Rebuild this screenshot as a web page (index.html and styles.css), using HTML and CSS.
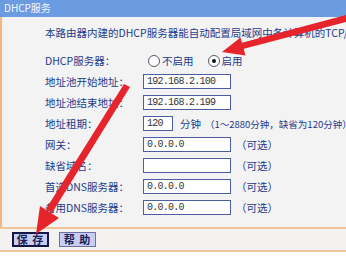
FILE: index.html
```html
<!DOCTYPE html>
<html>
<head>
<meta charset="utf-8">
<link rel="stylesheet" href="styles.css">
</head>
<body>
<div class="page">
  <div class="title">DHCP服务</div>
  <div class="panel">
    <p class="desc">本路由器内建的DHCP服务器能自动配置局域网中各计算机的TCP/IP协议。</p>
    <div class="form">
      <div class="row">
        <span class="label">DHCP服务器：</span>
        <span class="radios">
          <span class="radio"></span><span class="rtext">不启用</span>
          <span class="radio on"></span><span class="rtext">启用</span>
        </span>
      </div>
      <div class="row">
        <span class="label">地址池开始地址：</span>
        <span class="input">192.168.2.100</span>
      </div>
      <div class="row">
        <span class="label">地址池结束地址：</span>
        <span class="input">192.168.2.199</span>
      </div>
      <div class="row">
        <span class="label">地址租期：</span>
        <span class="input short">120</span>
        <span class="unit">分钟</span>
        <span class="hint">（1～2880分钟，缺省为120分钟）</span>
      </div>
      <div class="row">
        <span class="label">网关：</span>
        <span class="input">0.0.0.0</span>
        <span class="opt">（可选）</span>
      </div>
      <div class="row">
        <span class="label">缺省域名：</span>
        <span class="input"></span>
        <span class="opt">（可选）</span>
      </div>
      <div class="row">
        <span class="label">首选DNS服务器：</span>
        <span class="input">0.0.0.0</span>
        <span class="opt">（可选）</span>
      </div>
      <div class="row">
        <span class="label">备用DNS服务器：</span>
        <span class="input">0.0.0.0</span>
        <span class="opt">（可选）</span>
      </div>
    </div>
  </div>
  <div class="bar">
    <span class="btn focus">保 存</span>
    <span class="btn">帮 助</span>
  </div>
  <svg class="arrows" width="346" height="263" viewBox="0 0 346 263">
    <polygon points="346,15 346,22 243,49 241,43" fill="#e5242b"/>
    <polygon points="222,52 240.5,37.5 245.5,55.5" fill="#e5242b"/>
    <polygon points="124,84 130,87 52,213 46,209" fill="#e5242b"/>
    <polygon points="36,234 40,206 59,218" fill="#e5242b"/>
  </svg>
</div>
</body>
</html>
```
FILE: styles.css
```css
html, body {
  margin: 0;
  padding: 0;
  background: #ffffff;
}
.page {
  position: relative;
  width: 346px;
  height: 263px;
  overflow: hidden;
  font-family: "Noto Sans CJK SC", "Liberation Sans", sans-serif;
  font-size: 10.5px;
  color: #1c3a8c;
}
.title {
  height: 17px;
  line-height: 16px;
  background: #6b9ce2;
  color: #f4f8ff;
  padding-left: 4px;
  font-size: 10px;
}
.panel {
  height: 210px;
  box-sizing: border-box;
  background: #f3f3f3;
  border-left: 2px solid #f6b47e;
  padding-left: 43px;
  padding-top: 8px;
}
.desc {
  margin: 0;
  line-height: 16px;
  white-space: nowrap;
  overflow: hidden;
}
.form {
  margin-top: 9px;
}
.row {
  display: flex;
  align-items: center;
  height: 21px;
  white-space: nowrap;
}
.label {
  width: 98px;
  flex: none;
}
.radios {
  display: flex;
  align-items: center;
}
.radio {
  width: 10px;
  height: 10px;
  border: 1px solid #555a66;
  border-radius: 50%;
  background: #ffffff;
  margin-left: 5px;
  margin-right: 2px;
  position: relative;
}
.radio.on::after {
  content: "";
  position: absolute;
  left: 3px;
  top: 3px;
  width: 4px;
  height: 4px;
  border-radius: 50%;
  background: #111111;
}
.rtext {
  margin-right: 9px;
}
.input {
  width: 88px;
  height: 15px;
  box-sizing: border-box;
  border: 1px solid #4b5fa0;
  background: #ffffff;
  font-family: "Liberation Mono", monospace;
  font-size: 10px;
  letter-spacing: -0.75px;
  line-height: 13px;
  padding-left: 3px;
  color: #333333;
  flex: none;
}
.input.short {
  width: 30px;
}
.unit {
  margin-left: 7px;
}
.hint {
  margin-left: 4px;
  font-size: 9.5px;
}
.opt {
  margin-left: 5px;
}
.bar {
  height: 25px;
  box-sizing: border-box;
  border-top: 2px solid #f0c49a;
  border-bottom: 2px solid #f0c49a;
  background: #f3f2f1;
  display: flex;
  align-items: center;
  gap: 10px;
  padding-left: 12px;
}
.btn {
  width: 37px;
  height: 15px;
  box-sizing: border-box;
  border: 1px solid #6d6fa6;
  background: #c7cef2;
  color: #1a1f5a;
  font-weight: bold;
  font-size: 11px;
  letter-spacing: 1px;
  line-height: 13px;
  text-align: center;
}
.btn.focus {
  border: 2px solid #15174a;
  line-height: 11px;
}
.arrows {
  position: absolute;
  left: 0;
  top: 0;
  pointer-events: none;
}
```
